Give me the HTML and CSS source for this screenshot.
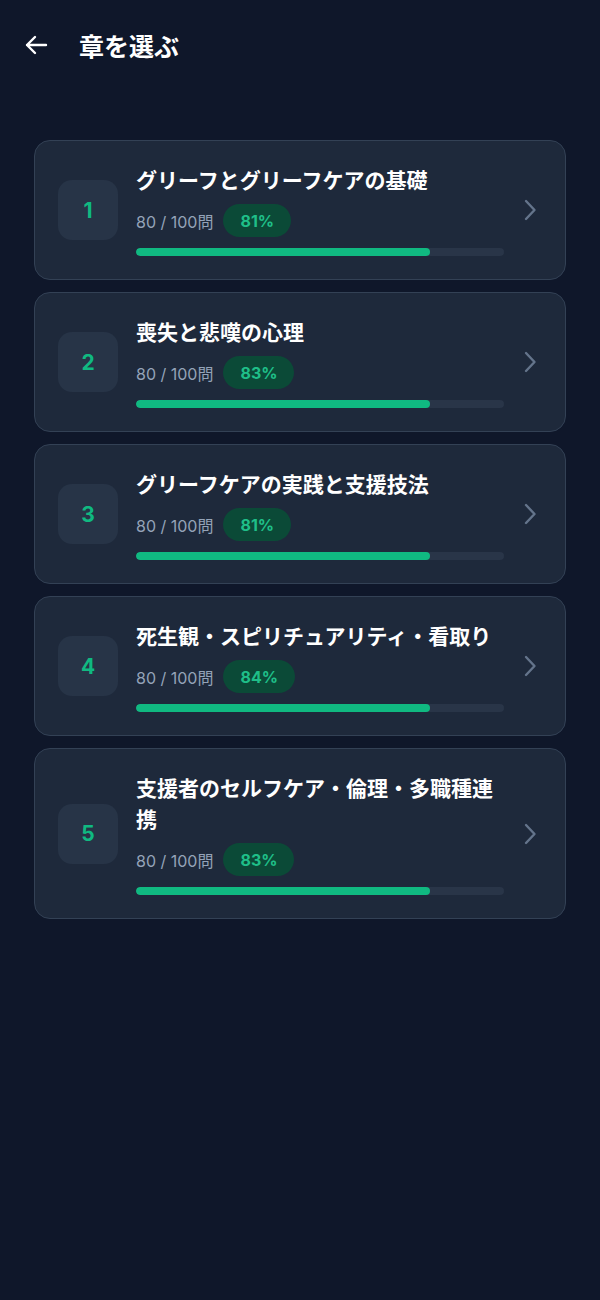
FILE: index.html
```html
<!DOCTYPE html>
<html lang="ja">
<head>
<meta charset="utf-8">
<title>章を選ぶ</title>
<link rel="stylesheet" href="styles.css">
</head>
<body>
<header class="header">
  <svg class="back" width="24" height="24" viewBox="0 0 24 24" fill="none" stroke="#ffffff" stroke-width="2.4" stroke-linecap="round" stroke-linejoin="round"><path d="M22 12H3M11 4L3 12L11 20"/></svg>
  <h1 class="title">章を選ぶ</h1>
</header>
<main class="list">
  <div class="card">
    <div class="num">1</div>
    <div class="body">
      <div class="ctitle">グリーフとグリーフケアの基礎</div>
      <div class="meta"><span class="count">80 / 100問</span><span class="badge">81%</span></div>
      <div class="track"><div class="fill" style="width:80%"></div></div>
    </div>
    <svg class="chev" width="20" height="24" viewBox="0 0 20 24" fill="none" stroke="#64748b" stroke-width="2.4" stroke-linecap="round" stroke-linejoin="round"><path d="M4 3L12.5 12L4 21"/></svg>
  </div>
  <div class="card">
    <div class="num">2</div>
    <div class="body">
      <div class="ctitle">喪失と悲嘆の心理</div>
      <div class="meta"><span class="count">80 / 100問</span><span class="badge">83%</span></div>
      <div class="track"><div class="fill" style="width:80%"></div></div>
    </div>
    <svg class="chev" width="20" height="24" viewBox="0 0 20 24" fill="none" stroke="#64748b" stroke-width="2.4" stroke-linecap="round" stroke-linejoin="round"><path d="M4 3L12.5 12L4 21"/></svg>
  </div>
  <div class="card">
    <div class="num">3</div>
    <div class="body">
      <div class="ctitle">グリーフケアの実践と支援技法</div>
      <div class="meta"><span class="count">80 / 100問</span><span class="badge">81%</span></div>
      <div class="track"><div class="fill" style="width:80%"></div></div>
    </div>
    <svg class="chev" width="20" height="24" viewBox="0 0 20 24" fill="none" stroke="#64748b" stroke-width="2.4" stroke-linecap="round" stroke-linejoin="round"><path d="M4 3L12.5 12L4 21"/></svg>
  </div>
  <div class="card">
    <div class="num">4</div>
    <div class="body">
      <div class="ctitle">死生観・スピリチュアリティ・看取り</div>
      <div class="meta"><span class="count">80 / 100問</span><span class="badge">84%</span></div>
      <div class="track"><div class="fill" style="width:80%"></div></div>
    </div>
    <svg class="chev" width="20" height="24" viewBox="0 0 20 24" fill="none" stroke="#64748b" stroke-width="2.4" stroke-linecap="round" stroke-linejoin="round"><path d="M4 3L12.5 12L4 21"/></svg>
  </div>
  <div class="card">
    <div class="num">5</div>
    <div class="body">
      <div class="ctitle">支援者のセルフケア・倫理・多職種連携</div>
      <div class="meta"><span class="count">80 / 100問</span><span class="badge">83%</span></div>
      <div class="track"><div class="fill" style="width:80%"></div></div>
    </div>
    <svg class="chev" width="20" height="24" viewBox="0 0 20 24" fill="none" stroke="#64748b" stroke-width="2.4" stroke-linecap="round" stroke-linejoin="round"><path d="M4 3L12.5 12L4 21"/></svg>
  </div>
</main>
</body>
</html>
```
FILE: styles.css
```css
* { box-sizing: border-box; }
html, body {
  margin: 0;
  padding: 0;
  background: #0f172a;
  min-height: 1300px;
}
body {
  font-family: Inter, "Noto Sans CJK JP", sans-serif;
  color: #ffffff;
}
.header {
  height: 90px;
  display: flex;
  align-items: center;
  padding-left: 24px;
  gap: 31px;
}
.back { display: block; }
.title {
  margin: 0;
  font-size: 25px;
  font-weight: 700;
  line-height: 1;
  font-family: "Noto Sans CJK JP", sans-serif;
}
.list {
  padding: 50px 34px 0 34px;
  display: flex;
  flex-direction: column;
  gap: 12px;
}
.card {
  background: #1e293b;
  border: 1px solid #334155;
  border-radius: 16px;
  padding: 23px;
  display: grid;
  grid-template-columns: 60px 1fr 20px;
  column-gap: 18px;
  align-items: center;
}
.num {
  width: 60px;
  height: 60px;
  border-radius: 14px;
  background: #273447;
  display: flex;
  align-items: center;
  justify-content: center;
  color: #10b981;
  font-size: 21px;
  font-weight: 700;
}
.body { min-width: 0; }
.ctitle {
  font-family: "Noto Sans CJK JP", sans-serif;
  font-size: 21px;
  font-weight: 700;
  line-height: 31px;
  color: #ffffff;
}
.meta {
  margin-top: 9px;
  display: flex;
  align-items: center;
  gap: 10px;
}
.count {
  color: #94a3b8;
  font-size: 16px;
}
.badge {
  height: 33px;
  padding: 0 17px;
  border-radius: 17px;
  background: #0b4a37;
  color: #1fbf88;
  font-weight: 700;
  font-size: 16px;
  display: flex;
  align-items: center;
}
.track {
  margin-top: 11px;
  height: 8px;
  border-radius: 4px;
  background: #293548;
  overflow: hidden;
}
.fill {
  height: 100%;
  background: #10b981;
  border-radius: 4px;
}
.chev { display: block; }
```
